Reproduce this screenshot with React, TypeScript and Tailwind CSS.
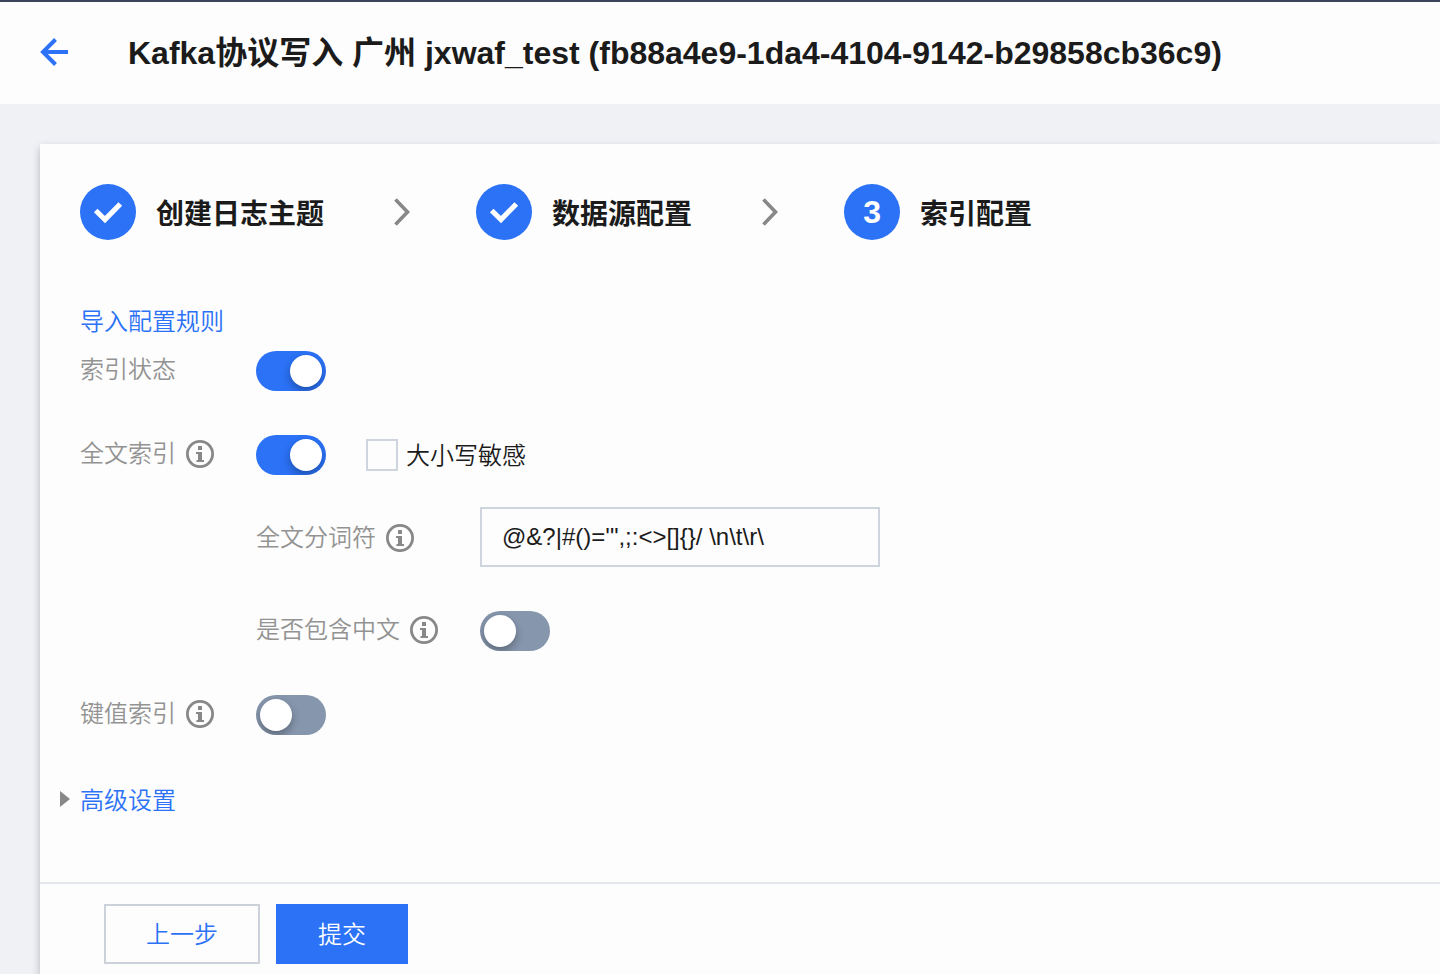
import React from "react";

function BackArrow() {
  return (
    <svg className="size-7" viewBox="0 0 28 28" fill="none" stroke="#2b72f6" strokeWidth="4" aria-hidden="true">
      <path d="M15.500 1.500 3 14l12.500 12.500M2.500 14H28" />
    </svg>
  );
}

function Check() {
  return (
    <svg className="size-14" viewBox="0 0 56 56" fill="none" stroke="#fff" strokeWidth="5.200" aria-hidden="true">
      <path d="M15.700 26.500 25 35.500 40.300 20" />
    </svg>
  );
}

function Chevron() {
  return (
    <svg className="mr-16 ml-17 h-7 w-5 shrink-0" viewBox="0 0 20 28" fill="none" stroke="#888" strokeWidth="3.600" aria-hidden="true">
      <path d="M3.500 1.500 15.500 14 3.500 26.500" />
    </svg>
  );
}

function Info() {
  return (
    <svg className="size-7 shrink-0" viewBox="0 0 28 28" aria-hidden="true">
      <circle cx="14" cy="14" r="12.600" fill="none" stroke="#888" strokeWidth="2.800" />
      <path fill="#888" d="M12 6h4v4h-4zM10 12h6v8h2v2h-7.500v-2H12v-6h-2z" />
    </svg>
  );
}

function Step({ label, mark }: { label: string; mark: React.ReactNode }) {
  return (
    <li className="flex shrink-0 items-center gap-5">
      <span className="flex size-14 items-center justify-center rounded-full bg-[#2b72f6] text-[32px] font-bold text-white">
        {mark}
      </span>
      <span className="pt-1.5 text-[28px] leading-10 font-bold text-[#1b1b1b]">{label}</span>
    </li>
  );
}

function Toggle({ id, on }: { id: string; on?: boolean }) {
  return (
    <input
      id={id}
      type="checkbox"
      role="switch"
      defaultChecked={on}
      className="h-10 w-[70px] shrink-0 cursor-pointer appearance-none overflow-hidden rounded-full bg-[#8696ad] p-1 before:block before:size-8 before:rounded-full before:bg-white before:shadow-[0_4px_8px_rgba(0,0,0,0.3)] checked:bg-[#2b72f6] checked:pl-[34px]"
    />
  );
}

function Label({ id, text, info, wide }: { id: string; text: string; info?: boolean; wide?: boolean }) {
  return (
    <div className={`flex shrink-0 items-center gap-2.5 ${wide ? "w-56" : "w-44"}`}>
      <label htmlFor={id} className="leading-8 text-[#939393]">
        {text}
      </label>
      {info && <Info />}
    </div>
  );
}

export default function App() {
  return (
    <div className="flex min-h-screen flex-col overflow-x-hidden bg-[#f0f1f5] font-['Liberation_Sans','Noto_Sans_CJK_SC',sans-serif] text-2xl font-[350] text-[#1b1b1b]">
      <header className="flex h-26 shrink-0 items-center gap-15 border-t-2 border-[#39435a] bg-[#fdfdfd] px-10 pb-0.5">
        <a href="#back" aria-label="返回">
          <BackArrow />
        </a>
        <h1 className="pt-0.5 text-[32px] leading-10 font-bold whitespace-nowrap">
          Kafka协议写入 广州 jxwaf_test (fb88a4e9-1da4-4104-9142-b29858cb36c9)
        </h1>
      </header>
      <main className="flex grow flex-col pt-10 pl-10">
        <div className="flex grow flex-col bg-[#fdfdfd] shadow-[0_4px_8px_rgba(54,58,80,0.32)]">
          <form className="flex grow flex-col" onSubmit={(e) => e.preventDefault()}>
            <div className="grow px-10 pt-10">
              <ol className="flex items-center">
                <Step label="创建日志主题" mark={<Check />} />
                <Chevron />
                <Step label="数据源配置" mark={<Check />} />
                <Chevron />
                <Step label="索引配置" mark="3" />
              </ol>
              <a href="#import" className="mt-16 block w-fit pt-0.5 leading-8 text-[#2b72f6]">
                导入配置规则
              </a>
              <div className="mt-[13px] flex items-center">
                <div className="pb-0.5">
                  <Label id="status" text="索引状态" />
                </div>
                <Toggle id="status" on />
              </div>
              <div className="mt-11 flex items-center">
                <div className="pb-0.5">
                  <Label id="fulltext" text="全文索引" info />
                </div>
                <Toggle id="fulltext" on />
                <label className="ml-10 flex items-center gap-2 leading-8">
                  <input type="checkbox" className="size-8 appearance-none border-2 border-[#cfd5de] checked:bg-[#2b72f6]" />
                  <span className="pt-0.5">大小写敏感</span>
                </label>
              </div>
              <div className="mt-8 flex items-center pl-44">
                <div className="pt-0.5">
                  <Label id="tokens" text="全文分词符" info wide />
                </div>
                <input
                  id="tokens"
                  type="text"
                  defaultValue={"@&?|#()='\",;:<>[]{}/ \\n\\t\\r\\"}
                  className="h-15 w-100 border-2 border-[#cfd5de] px-5 leading-8 outline-none"
                />
              </div>
              <div className="mt-11 flex items-center pl-44">
                <div className="pb-0.5">
                  <Label id="chinese" text="是否包含中文" info wide />
                </div>
                <Toggle id="chinese" />
              </div>
              <div className="mt-11 flex items-center">
                <div className="pb-0.5">
                  <Label id="keyvalue" text="键值索引" info />
                </div>
                <Toggle id="keyvalue" />
              </div>
              <button type="button" className="mt-[46px] -ml-5 flex items-center gap-2.5 leading-8 text-[#2b72f6]">
                <svg className="h-4 w-2.5" viewBox="0 0 10 16" fill="#888" aria-hidden="true">
                  <path d="M0 0 10 8 0 16z" />
                </svg>
                <span className="pt-1">高级设置</span>
              </button>
            </div>
            <footer className="flex gap-4 border-t-2 border-[#e3e6ea] px-16 pt-5 pb-2.5">
              <button type="button" className="h-15 border-2 border-[#cdd1da] px-10 pt-0.5 text-[#2b72f6]">
                上一步
              </button>
              <button type="submit" className="h-15 bg-[#2b72f6] px-[42px] pt-0.5 text-white">
                提交
              </button>
            </footer>
          </form>
        </div>
      </main>
    </div>
  );
}
